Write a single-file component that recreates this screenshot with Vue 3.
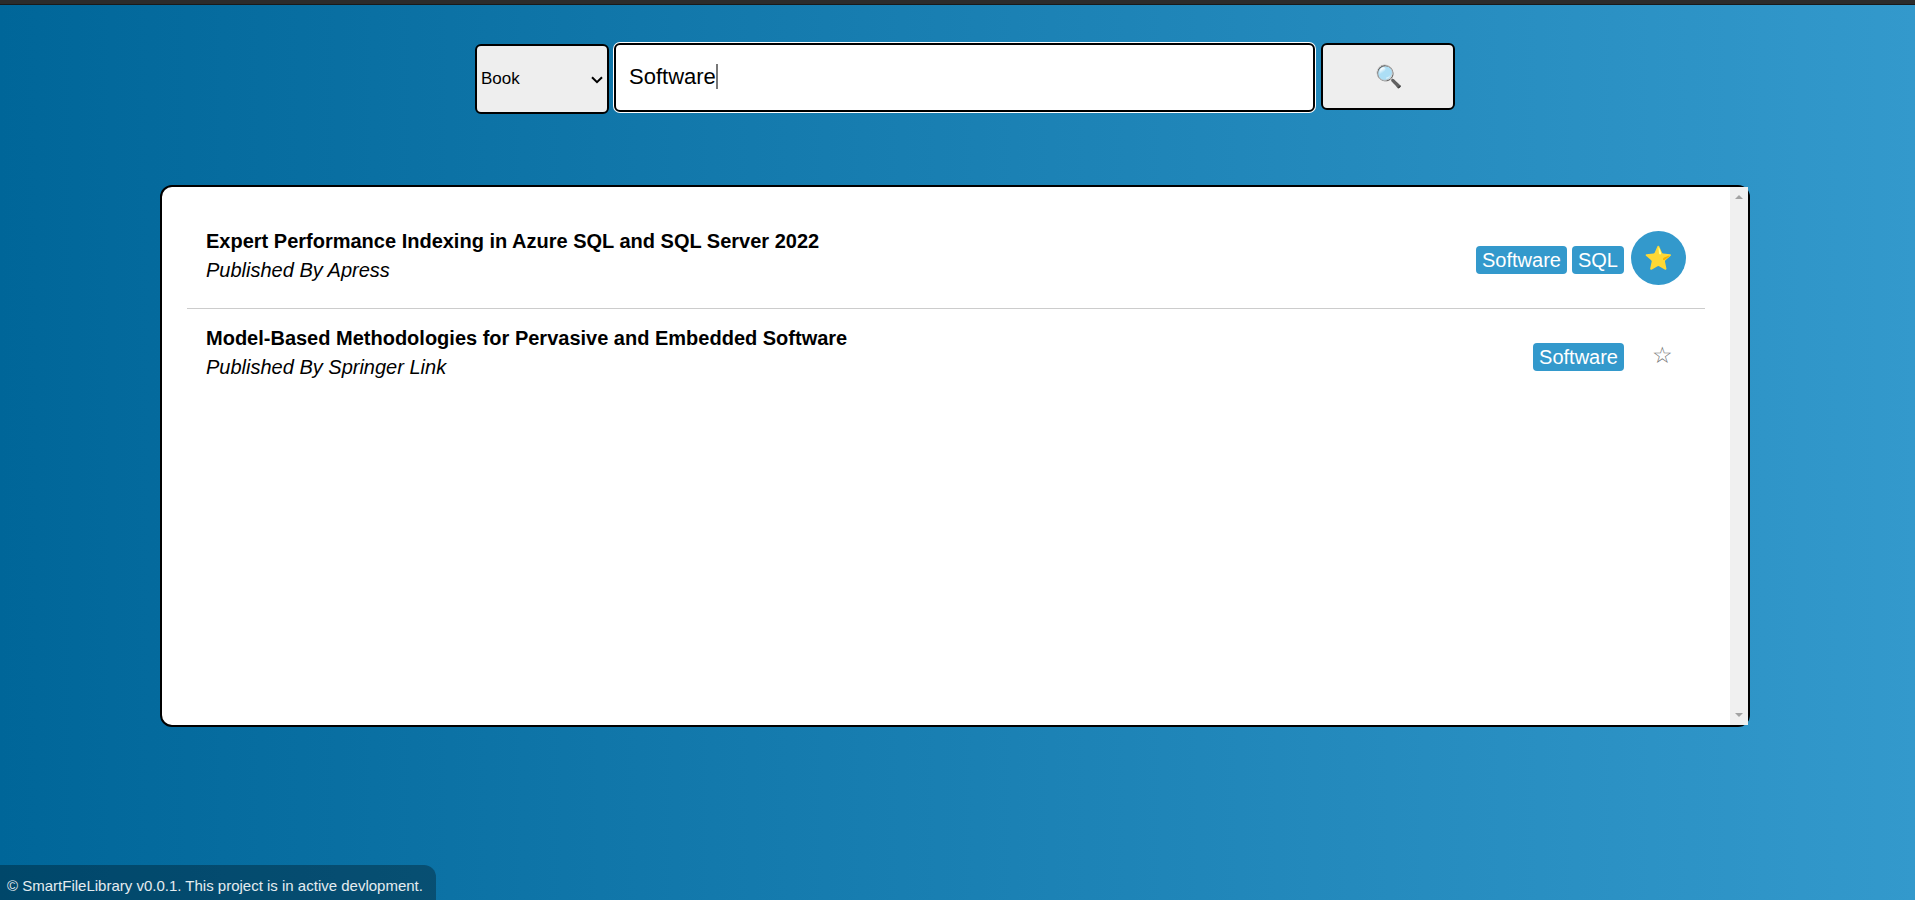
<script setup>
import { ref } from 'vue'

const kind = ref('Book')
const query = ref('Software')
const books = ref([
  { title: 'Expert Performance Indexing in Azure SQL and SQL Server 2022', by: 'Apress', tags: ['Software', 'SQL'], starred: true },
  { title: 'Model-Based Methodologies for Pervasive and Embedded Software', by: 'Springer Link', tags: ['Software'], starred: false },
])
</script>

<template>
  <div class="page">
    <div class="topbar"></div>
    <form class="search" @submit.prevent>
      <div class="kind-box">
        <select v-model="kind" class="kind" aria-label="Type">
          <option>Book</option>
          <option>Article</option>
        </select>
        <svg class="chevron" viewBox="0 0 12 8" aria-hidden="true">
          <path d="M1 1.2 L6 6.2 L11 1.2" fill="none" stroke="#000" stroke-width="2" />
        </svg>
      </div>
      <div class="query-box">
        <input v-model="query" class="query" type="text" aria-label="Search" />
        <span class="caret"></span>
      </div>
      <button class="go" type="submit" aria-label="Search">🔍</button>
    </form>

    <main class="panel">
      <ul class="list">
        <li v-for="book in books" :key="book.title" class="row">
          <div class="info">
            <h2 class="title">{{ book.title }}</h2>
            <p class="by">Published By {{ book.by }}</p>
          </div>
          <div class="side">
            <span v-for="tag in book.tags" :key="tag" class="tag">{{ tag }}</span>
            <button
              type="button"
              class="star"
              :class="{ on: book.starred }"
              aria-label="Favourite"
              @click="book.starred = !book.starred"
            >{{ book.starred ? '⭐' : '☆' }}</button>
          </div>
        </li>
      </ul>
      <div class="track" aria-hidden="true">
        <svg class="arrow" viewBox="0 0 8 4"><path d="M0 4 L4 0 L8 4 Z" fill="#a3a3a3" /></svg>
        <svg class="arrow" viewBox="0 0 8 4"><path d="M0 0 L4 4 L8 0 Z" fill="#a3a3a3" /></svg>
      </div>
    </main>

    <footer class="foot">© SmartFileLibrary v0.0.1. This project is in active devlopment.</footer>
  </div>
</template>

<style>
body {
  margin: 0;
}
</style>

<style scoped>
.page {
  box-sizing: border-box;
  display: flex;
  flex-direction: column;
  min-height: 100vh;
  font-family: "Liberation Sans", Arial, sans-serif;
  font-size: 20px;
  color: #000;
  background: linear-gradient(90deg, #006699, #3399cc);
}
.topbar {
  height: 4px;
  background: #2c2c2c;
  border-bottom: 1px solid #1a1a1a;
}
.search {
  display: flex;
  align-items: flex-start;
  gap: 6px;
  width: 995px;
  max-width: 96%;
  margin: 38px auto 0;
  padding-left: 15px;
  box-sizing: border-box;
}
.kind-box {
  position: relative;
  width: 134px;
  margin-top: 1px;
}
.kind,
.query,
.go {
  box-sizing: border-box;
  display: block;
  width: 100%;
  font-family: inherit;
  color: #000;
  border: 2px solid #000;
  border-radius: 6px;
  background: #eee;
}
.kind {
  appearance: none;
  height: 70px;
  padding: 0 4px 2px;
  font-size: 17px;
}
.chevron {
  position: absolute;
  right: 6px;
  top: 32px;
  width: 12px;
  height: 8px;
  pointer-events: none;
}
.query-box {
  position: relative;
  flex: 1;
  margin-left: -1px;
}
.query {
  height: 69px;
  padding: 0 13px 2px;
  font-size: 22px;
  background: #fff;
  box-shadow: 0 0 0 1px #fff;
  outline: none;
}
.caret {
  position: absolute;
  left: 102px;
  top: 21px;
  width: 2px;
  height: 25px;
  background: #777;
}
.go {
  width: 134px;
  height: 67px;
  padding: 0;
  font-size: 22px;
}
.panel {
  display: flex;
  box-sizing: border-box;
  height: 542px;
  margin: 71px 165px 0 160px;
  border: 2px solid #000;
  border-radius: 12px;
  background: #fff;
}
.list {
  flex: 1;
  margin: 0;
  padding: 25px;
  list-style: none;
}
.row {
  display: flex;
  justify-content: space-between;
  align-items: flex-start;
  box-sizing: border-box;
  height: 97px;
  padding: 15px 19px 0;
  border-bottom: 1px solid #ccc;
}
.row:last-child {
  border-bottom: 0;
}
.title,
.by {
  margin: 0;
  font-size: 20px;
  line-height: 29px;
}
.by {
  font-style: italic;
}
.side {
  display: flex;
  align-items: flex-start;
  padding-top: 4px;
}
.tag {
  margin: 15px 5px 0 0;
  padding: 0 6px;
  line-height: 28px;
  color: #fff;
  background: #3399cc;
  border-radius: 4px;
}
.star {
  box-sizing: border-box;
  width: 55px;
  height: 54px;
  margin-left: 2px;
  padding: 0 0 0 8px;
  font-family: inherit;
  font-size: 23px;
  color: #777;
  background: none;
  border: 0;
  border-radius: 50%;
}
.star.on {
  padding: 0;
  background: #3399cc;
}
.track {
  display: flex;
  flex-direction: column;
  justify-content: space-between;
  align-items: center;
  box-sizing: border-box;
  width: 18px;
  padding: 8px 0;
  background: #f0f0f0;
}
.arrow {
  width: 8px;
  height: 4px;
}
.foot {
  align-self: flex-start;
  margin-top: auto;
  padding: 6px 13px 0 7px;
  font-size: 15px;
  line-height: 29px;
  color: #e4ecf0;
  background: rgba(0, 0, 0, 0.3);
  border-top-right-radius: 12px;
}
</style>
